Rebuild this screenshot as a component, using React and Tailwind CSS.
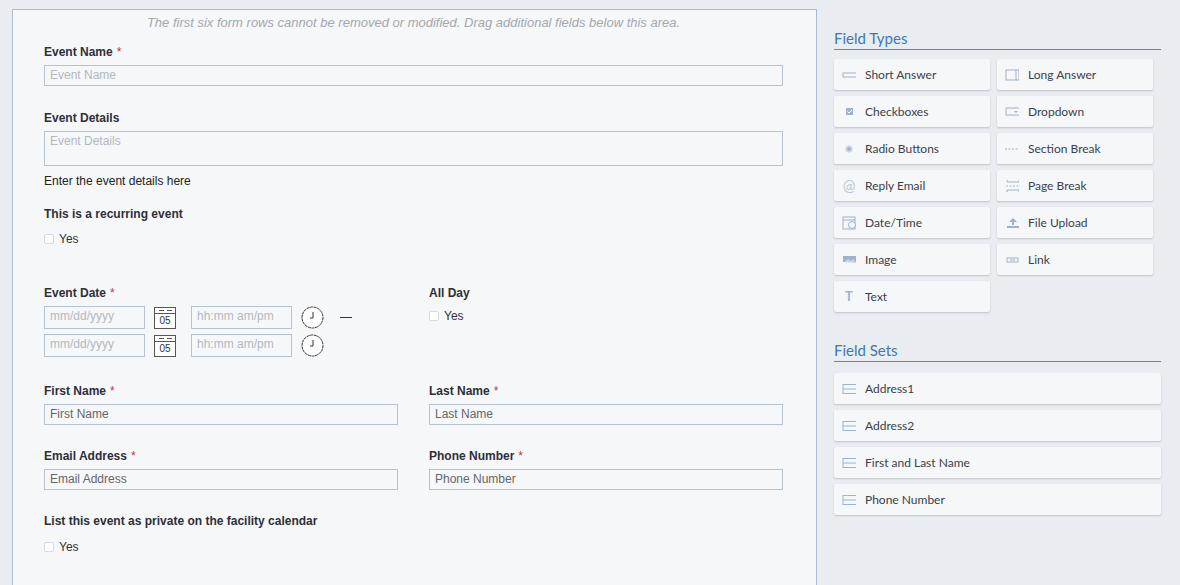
import React from 'react';

const Req = () => <span className="ml-1 text-[#c0392b] font-normal">*</span>;

const Label = ({ children, req, className = '' }) => (
  <div className={`text-[12px] font-bold text-[#2d2f3a] leading-[16px] ${className}`}>
    {children}
    {req && <Req />}
  </div>
);

const Input = ({ ph, className = '', faint }) => (
  <div className={`h-[21px] border border-[#b7c2cf] bg-[#f6f7f9] px-[5px] text-[12px] leading-[19px] ${faint ? 'text-[#b3b8bf]' : 'text-[#666]'} ${className}`}>
    {ph}
  </div>
);

const Check = ({ className = '' }) => (
  <div className={`flex items-center gap-[5px] text-[12px] text-[#333] ${className}`}>
    <span className="w-[10px] h-[10px] border border-[#d6dbe1] rounded-[2px] bg-white" />
    Yes
  </div>
);

const Cal = () => (
  <div className="w-[22px] h-[22px] border border-[#555] bg-white flex flex-col">
    <div className="h-[6px] border-b border-[#555] flex justify-around items-center px-[2px]">
      <span className="w-[5px] h-px bg-[#555]" />
      <span className="w-[5px] h-px bg-[#555]" />
    </div>
    <div className="text-[10px] leading-[13px] text-center text-[#333]">05</div>
  </div>
);

const Clock = () => (
  <svg width="23" height="23" viewBox="0 0 23 23">
    <circle cx="11.5" cy="11.5" r="10.5" fill="white" stroke="#333" strokeWidth="1" strokeDasharray="3 0.6" />
    <path d="M12 6v6h-3" fill="none" stroke="#333" strokeWidth="1" />
  </svg>
);

const ic = '#9fb3c8';
const icons = {
  short: <svg width="16" height="12"><rect x="1" y="4" width="14" height="4" fill="none" stroke={ic} /></svg>,
  long: <svg width="16" height="12"><rect x="1" y="1" width="13" height="10" fill="none" stroke={ic} /><line x1="11" y1="1" x2="11" y2="11" stroke={ic} /></svg>,
  check: <svg width="16" height="12"><rect x="4" y="2" width="7" height="7" fill={ic} /><path d="M5.5 5.5l1.5 1.5 3-3" stroke="white" fill="none" /></svg>,
  drop: <svg width="16" height="12"><rect x="1" y="2" width="14" height="7" fill="none" stroke={ic} /><path d="M9 5h4l-2 2z" fill={ic} /></svg>,
  radio: <svg width="16" height="12"><circle cx="7" cy="6" r="3.5" fill="#c9d4e0" /><circle cx="7" cy="6" r="1.8" fill={ic} /></svg>,
  section: <svg width="16" height="12"><line x1="0" y1="6" x2="16" y2="6" stroke={ic} strokeDasharray="2 1.5" /></svg>,
  reply: <span className="text-[15px] leading-none text-[#b8c7d6]">@</span>,
  page: <svg width="16" height="14"><path d="M2 1v2h12V1M2 13v-2h12v2" fill="none" stroke={ic} /><line x1="1" y1="7" x2="15" y2="7" stroke={ic} strokeDasharray="2 1.5" /></svg>,
  date: <svg width="16" height="14"><rect x="1" y="1" width="12" height="12" fill="none" stroke={ic} /><line x1="1" y1="4" x2="13" y2="4" stroke={ic} /><circle cx="10" cy="9" r="3.5" fill="#f6f7f9" stroke={ic} /></svg>,
  upload: <svg width="16" height="12"><path d="M8 1l-4 4h3v3h2V5h3z" fill={ic} /><rect x="2" y="9" width="12" height="2" fill={ic} /></svg>,
  image: <svg width="16" height="12"><rect x="1" y="2" width="14" height="6" fill={ic} /><path d="M2 8l4-3 3 2 2-2 4 4" fill="#c9d4e0" /></svg>,
  link: <svg width="16" height="12"><rect x="2" y="4" width="11" height="4" fill="none" stroke={ic} /><line x1="5" y1="6" x2="10" y2="6" stroke={ic} /></svg>,
  text: <span className="text-[13px] font-bold leading-none text-[#9fb3c8]">T</span>,
  set: <svg width="16" height="12"><rect x="1" y="1.5" width="14" height="9" fill="none" stroke={ic} /><line x1="1" y1="6" x2="15" y2="6" stroke={ic} /></svg>,
};

const Tile = ({ icon, label, className = '' }) => (
  <div className={`h-[31px] bg-[#f6f7f9] rounded-[2px] shadow-[0_1px_2px_rgba(0,0,0,0.18)] flex items-center pl-[8px] gap-[9px] text-[12px] text-[#3a3f4a] ${className}`}>
    <span className="w-[14px] flex justify-center items-center">{icons[icon]}</span>
    {label}
  </div>
);

const types = [
  ['short', 'Short Answer'], ['long', 'Long Answer'],
  ['check', 'Checkboxes'], ['drop', 'Dropdown'],
  ['radio', 'Radio Buttons'], ['section', 'Section Break'],
  ['reply', 'Reply Email'], ['page', 'Page Break'],
  ['date', 'Date/Time'], ['upload', 'File Upload'],
  ['image', 'Image'], ['link', 'Link'],
  ['text', 'Text'],
];

export default function App() {
  return (
    <div className="w-[1180px] h-[585px] overflow-hidden bg-[#e9edf1] flex" style={{ fontFamily: 'Arial, "Liberation Sans", sans-serif' }}>
      <div className="ml-[12px] mt-[9px] w-[805px] h-[600px] border border-[#a8bdd3] bg-[#f6f7f9] pl-[31px] pr-[33px]">
        <div className="text-center italic text-[13px] text-[#a4a8ad] leading-[26px] pt-0">
          The first six form rows cannot be removed or modified. Drag additional fields below this area.
        </div>
        <Label req className="mt-[8px]">Event Name</Label>
        <Input ph="Event Name" faint className="mt-[5px]" />
        <Label className="mt-[24px]">Event Details</Label>
        <Input ph="Event Details" faint className="mt-[5px] h-[35px]" />
        <div className="mt-[6px] text-[12px] text-[#222]">Enter the event details here</div>
        <Label className="mt-[16px]">This is a recurring event</Label>
        <Check className="mt-[8px]" />
        <div className="mt-[37px] flex gap-[31px]">
          <div className="w-[354px]">
            <Label req>Event Date</Label>
            {[0, 1].map((i) => (
              <div key={i} className="flex items-center mt-[5px]">
                <Input ph="mm/dd/yyyy" faint className="w-[101px] h-[23px]" />
                <div className="ml-[9px]"><Cal /></div>
                <Input ph="hh:mm am/pm" faint className="ml-[15px] w-[101px] h-[23px]" />
                <div className="ml-[9px]"><Clock /></div>
                {i === 0 && <span className="ml-[16px] w-[12px] h-px bg-[#333]" />}
              </div>
            ))}
          </div>
          <div className="w-[354px]">
            <Label>All Day</Label>
            <Check className="mt-[6px]" />
          </div>
        </div>
        <div className="mt-[26px] flex gap-[31px]">
          <div className="w-[354px]"><Label req>First Name</Label><Input ph="First Name" className="mt-[5px]" /></div>
          <div className="w-[354px]"><Label req>Last Name</Label><Input ph="Last Name" className="mt-[5px]" /></div>
        </div>
        <div className="mt-[23px] flex gap-[31px]">
          <div className="w-[354px]"><Label req>Email Address</Label><Input ph="Email Address" className="mt-[5px]" /></div>
          <div className="w-[354px]"><Label req>Phone Number</Label><Input ph="Phone Number" className="mt-[5px]" /></div>
        </div>
        <Label className="mt-[23px]">List this event as private on the facility calendar</Label>
        <Check className="mt-[9px]" />
      </div>
      <div className="ml-[17px] mt-[28px] w-[327px]" style={{ fontFamily: 'Lato, "Noto Sans", sans-serif' }}>
        <div className="text-[15px] text-[#3f78b3] leading-[20px] pb-[1px] border-b border-[#5a87b8]">Field Types</div>
        <div className="mt-[9px] grid grid-cols-[156px_156px] gap-x-[7px] gap-y-[6px]">
          {types.map(([i, l]) => <Tile key={l} icon={i} label={l} />)}
        </div>
        <div className="mt-[28px] text-[15px] text-[#3f78b3] leading-[20px] pb-[1px] border-b border-[#5a87b8]">Field Sets</div>
        <div className="mt-[11px] flex flex-col gap-[6px]">
          {['Address1', 'Address2', 'First and Last Name', 'Phone Number'].map((l) => <Tile key={l} icon="set" label={l} />)}
        </div>
      </div>
    </div>
  );
}
